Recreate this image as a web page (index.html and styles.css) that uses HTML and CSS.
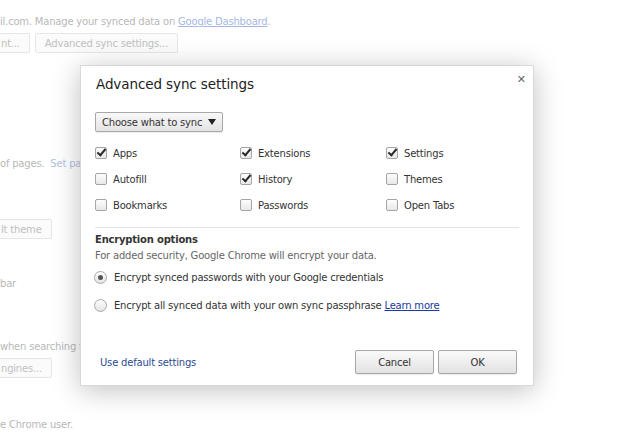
FILE: index.html
```html
<!DOCTYPE html>
<html>
<head>
<meta charset="utf-8">
<link rel="stylesheet" href="styles.css">
</head>
<body>
<div class="page">
  <p class="bg-line l1">il.com. Manage your synced data on <a class="bg-link">Google Dashboard</a>.</p>
  <div class="bg-row r1"><span class="bg-btn cut">nt...</span><span class="bg-btn">Advanced sync settings...</span></div>
  <p class="bg-line l2">of pages.&nbsp; <span class="bg-link2">Set pages</span></p>
  <div class="bg-row r2"><span class="bg-btn cut">lt theme</span></div>
  <p class="bg-line l3">bar</p>
  <p class="bg-line l4">when searching from the omnibox</p>
  <div class="bg-row r3"><span class="bg-btn cut">ngines...</span></div>
  <p class="bg-line l5">e Chrome user.</p>
</div>

<div class="dialog">
  <div class="close">&#x2715;</div>
  <h1 class="title">Advanced sync settings</h1>
  <div class="select">Choose what to sync <span class="arrow"></span></div>
  <div class="grid">
    <label class="item"><span class="cb on"></span>Apps</label>
    <label class="item"><span class="cb on"></span>Extensions</label>
    <label class="item"><span class="cb on"></span>Settings</label>
    <label class="item"><span class="cb"></span>Autofill</label>
    <label class="item"><span class="cb on"></span>History</label>
    <label class="item"><span class="cb"></span>Themes</label>
    <label class="item"><span class="cb"></span>Bookmarks</label>
    <label class="item"><span class="cb"></span>Passwords</label>
    <label class="item"><span class="cb"></span>Open Tabs</label>
  </div>
  <div class="sep"></div>
  <h2 class="enc-title">Encryption options</h2>
  <p class="enc-desc">For added security, Google Chrome will encrypt your data.</p>
  <label class="radio-row"><span class="radio on"></span>Encrypt synced passwords with your Google credentials</label>
  <label class="radio-row r-second"><span class="radio"></span>Encrypt all synced data with your own sync passphrase <a class="learn">Learn more</a></label>
  <div class="footer">
    <a class="default-link">Use default settings</a>
    <div class="buttons">
      <span class="btn">Cancel</span>
      <span class="btn">OK</span>
    </div>
  </div>
</div>
</body>
</html>
```

FILE: styles.css
```css
html, body {
  margin: 0;
  padding: 0;
  background: #fff;
  width: 640px;
  height: 432px;
  overflow: hidden;
  font-family: "DejaVu Sans", "Liberation Sans", sans-serif;
}

.page {
  font-size: 10px;
  letter-spacing: -0.2px;
  color: #b8b8b8;
  position: relative;
  height: 432px;
}

.bg-line {
  margin: 0;
  height: 16px;
  line-height: 16px;
  white-space: nowrap;
}
.bg-link {
  color: #a3b7e2;
  text-decoration: underline;
}
.bg-link2 {
  color: #b0c1e6;
}
.l1 { padding-top: 14px; }
.bg-row {
  display: flex;
  gap: 5px;
  height: 19px;
}
.r1 { margin-top: 3px; }
.bg-btn {
  display: inline-flex;
  align-items: center;
  padding: 0 9px;
  height: 18px;
  border: 1px solid #e6e6e6;
  border-radius: 2px;
  color: #c0c0c0;
  background: #fbfbfb;
  white-space: nowrap;
}
.bg-btn.cut { margin-left: -9px; }
.l2 { margin-top: 104px; }
.r2 { margin-top: 47px; }
.l3 { margin-top: 38px; }
.l4 { margin-top: 47px; }
.r3 { margin-top: 3px; }
.l5 { margin-top: 40px; }

/* dialog */
.dialog {
  position: absolute;
  left: 80px;
  top: 65px;
  width: 454px;
  height: 321px;
  box-sizing: border-box;
  background: #fff;
  border: 1px solid #d8d8d8;
  box-shadow: 0 4px 26px rgba(0, 0, 0, 0.25);
  padding: 0 14px 0 14px;
  display: flex;
  flex-direction: column;
  color: #333;
  font-size: 10px;
  letter-spacing: -0.2px;
}
.close {
  position: absolute;
  right: 7px;
  top: 7px;
  font-size: 11px;
  font-weight: bold;
  color: #666;
  letter-spacing: 0;
}
.title {
  margin: 10px 0 0 1px;
  font-size: 13.5px;
  font-weight: normal;
  color: #222;
  line-height: 16px;
  letter-spacing: -0.1px;
}
.select {
  margin-top: 20px;
  align-self: flex-start;
  box-sizing: border-box;
  height: 20px;
  padding: 0 6px 0 6px;
  display: flex;
  align-items: center;
  gap: 6px;
  border: 1px solid #a8a8a8;
  border-radius: 2px;
  background: linear-gradient(#f8f8f8, #e4e4e4);
  color: #333;
  box-shadow: 0 1px 1px rgba(0,0,0,0.08);
}
.arrow {
  width: 0;
  height: 0;
  border-left: 4px solid transparent;
  border-right: 4px solid transparent;
  border-top: 6px solid #222;
}
.grid {
  margin-top: 8px;
  display: grid;
  grid-template-columns: 145px 146px 1fr;
  grid-auto-rows: 26px;
}
.item {
  display: flex;
  align-items: center;
  gap: 6px;
}
.cb {
  width: 12px;
  height: 12px;
  box-sizing: border-box;
  border: 1px solid #a5a5a5;
  border-radius: 2px;
  background: linear-gradient(#fdfdfd, #e8e8e8);
  position: relative;
}
.cb.on::after {
  content: "";
  position: absolute;
  left: 3px;
  top: -1px;
  width: 3px;
  height: 7px;
  border-right: 2px solid #2a2a2a;
  border-bottom: 2px solid #2a2a2a;
  transform: rotate(40deg);
}
.sep {
  margin-top: 9px;
  height: 1px;
  background: #e2e2e2;
}
.enc-title {
  margin: 5px 0 0 0;
  font-size: 10px;
  font-weight: bold;
  line-height: 14px;
}
.enc-desc {
  margin: 2px 0 0 0;
  color: #666;
  line-height: 14px;
}
.radio-row {
  margin-top: 7px;
  display: flex;
  align-items: center;
  gap: 7px;
  height: 14px;
  white-space: nowrap;
}
.r-second { margin-top: 14px; }
.radio {
  width: 13px;
  height: 13px;
  box-sizing: border-box;
  border-radius: 50%;
  border: 1px solid #a8a8a8;
  background: linear-gradient(#fefefe, #e4e4e4);
  position: relative;
  margin-left: -1px;
}
.radio.on::after {
  content: "";
  position: absolute;
  left: 3px;
  top: 3px;
  width: 5px;
  height: 5px;
  border-radius: 50%;
  background: #555;
}
.learn {
  color: #1a3aa0;
  text-decoration: underline;
  margin-left: -4px;
}
.footer {
  margin-top: auto;
  margin-bottom: 11px;
  display: flex;
  align-items: center;
  justify-content: space-between;
}
.default-link {
  color: #2c4b93;
  margin-left: 5px;
}
.buttons {
  display: flex;
  gap: 4px;
  margin-right: 2px;
}
.btn {
  width: 79px;
  height: 24px;
  box-sizing: border-box;
  display: flex;
  align-items: center;
  justify-content: center;
  border: 1px solid #a8a8a8;
  border-radius: 2px;
  background: linear-gradient(#fafafa, #e2e2e2);
  color: #333;
  box-shadow: 0 1px 1px rgba(0,0,0,0.08);
}
```
